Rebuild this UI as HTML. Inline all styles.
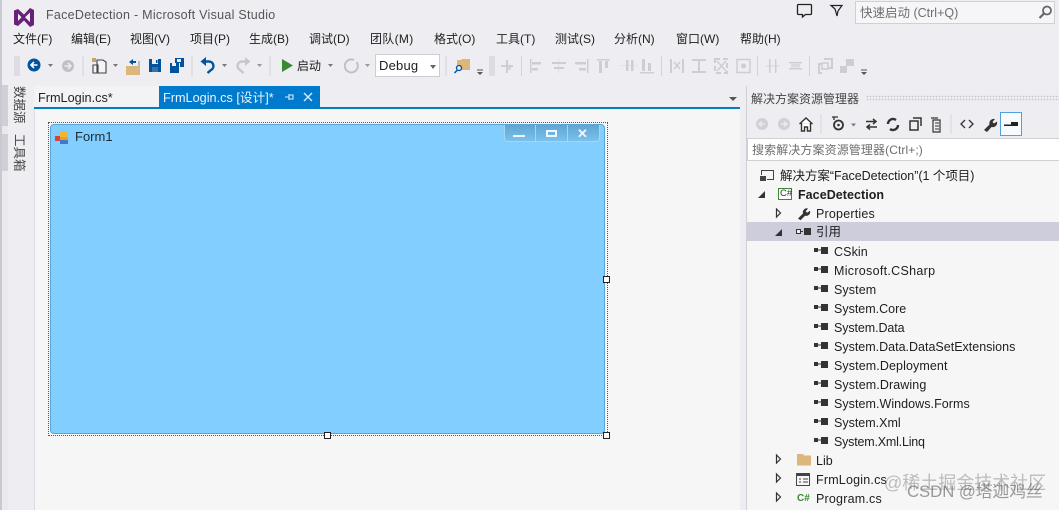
<!DOCTYPE html>
<html><head><meta charset="utf-8">
<style>
*{box-sizing:border-box}
html,body{margin:0;padding:0}
html{background:#eeeef2}
body{width:1059px;height:510px;overflow:hidden;position:relative;background:#eeeef2;font-family:"Liberation Sans","Noto Sans CJK SC",sans-serif;font-size:12px;color:#1e1e1e;filter:blur(.3px)}
.t{position:absolute;white-space:nowrap;line-height:16px}
.b{position:absolute}
svg{position:absolute;left:0;top:0}
.m{top:31px;font-size:12px;color:#1e1e1e}
.r{font-size:12.5px;left:834px}
.grip{position:absolute;width:6px;height:20px;background-image:radial-gradient(#a8a8b2 40%,transparent 45%);background-size:2px 2px}
</style></head>
<body>
<div class="b" style="left:0;top:0;width:2px;height:510px;background:#c9c9d2"></div>
<div class="b" style="left:2px;top:85px;width:6px;height:425px;background:#e9e9ee"></div>

<!-- document area -->
<div class="b" style="left:34px;top:109px;width:706px;height:401px;background:#f6f6f7;border-left:1px solid #dcdce2"></div>
<div class="b" style="left:34px;top:107px;width:706px;height:2px;background:#007fc0"></div>
<div class="b" style="left:159px;top:86px;width:161px;height:21px;background:#007acc"></div>
<div class="b" style="left:34px;top:86px;width:125px;height:21px;background:#f3f3f6"></div>

<!-- right panel -->
<div class="b" style="left:746px;top:86px;width:313px;height:424px;background:#f6f6f6;border-left:1px solid #cfcfd6"></div>
<div class="b" style="left:747px;top:86px;width:312px;height:53px;background:#eeeef2"></div>
<div class="b" style="left:747px;top:138px;width:312px;height:23px;background:#fff;border:1px solid #d0d0d6;border-right:0"></div>
<div class="b" style="left:747px;top:222px;width:312px;height:19px;background:#cdcddb"></div>
<div class="b" style="left:866px;top:95px;width:193px;height:6px;background-image:radial-gradient(#c4c4cc 35%,transparent 40%);background-size:3px 3px"></div>
<div class="b" style="left:1000px;top:112px;width:22px;height:24px;background:#f7fbff;border:1px solid #4fa0dc"></div>

<!-- search -->
<div class="b" style="left:855px;top:1px;width:200px;height:23px;background:#f6f6f8;border:1px solid #cfcfd6"></div>

<!-- form designer -->
<div class="b" style="left:48px;top:122px;width:560px;height:314px;border:1px dotted #555"></div>
<div class="b" style="left:50px;top:124px;width:555px;height:310px;background:#82cfff;border:1px solid #5ba5d6;border-radius:4px"></div>
<div class="b" style="left:504px;top:125px;width:96px;height:17px;background:linear-gradient(#5fa6d2,#7cc1ec);border:1px solid #a6d5f0;border-top:0;border-radius:0 0 4px 4px"></div>
<div class="b" style="left:535px;top:125px;width:1px;height:16px;background:#a6d5f0"></div>
<div class="b" style="left:567px;top:125px;width:1px;height:16px;background:#a6d5f0"></div>
<div class="b" style="left:513px;top:135px;width:12px;height:2px;background:#eef8ff"></div>
<div class="b" style="left:546px;top:130px;width:11px;height:7px;border:2px solid #eef8ff"></div>
<div class="t" style="left:577px;top:127px;color:#eef8ff;font-size:13px;font-weight:bold;line-height:14px">✕</div>
<div class="b" style="left:324px;top:432px;width:7px;height:7px;background:#fff;border:1px solid #222"></div>
<div class="b" style="left:603px;top:432px;width:7px;height:7px;background:#fff;border:1px solid #222"></div>
<div class="b" style="left:603px;top:276px;width:7px;height:7px;background:#fff;border:1px solid #222"></div>

<div class="grip" style="left:14px;top:56px"></div>
<div class="grip" style="left:489px;top:56px"></div>

<svg width="1059" height="510" viewBox="0 0 1059 510">
<!-- VS logo -->
<path d="M14 10.500l4-1.500 6 5.500 6-6.500 4 2v15l-4 2-6-6.500-6 5.500-4-1.500zM18 13.500v7.500l3.500-3.700zM30 12.500l-5 4.800 5 4.800z" fill="#68217a" fill-rule="evenodd"/>
<!-- nav -->
<circle cx="34" cy="65" r="6.500" fill="#00539c"/><path d="M37.500 65h-6M34 62l-3 3 3 3" stroke="#fff" stroke-width="1.600" fill="none"/>
<path d="M48 64h5l-2.500 3z" fill="#777"/>
<circle cx="68" cy="66" r="6" fill="#c0c0c6"/><path d="M64.500 66h6M68 63l3 3-3 3" stroke="#eee" stroke-width="1.500" fill="none"/>
<rect x="82.500" y="56" width="1" height="20" fill="#d0d0d8"/>
<!-- new project -->
<path d="M97 60h6l3 2v11h-9z M93 65h5v8h-5z" fill="#f4f4f6" stroke="#424242" stroke-width="1.100"/><rect x="92" y="58" width="4" height="4" fill="#c9a26a"/>
<path d="M113 64h5l-2.500 3z" fill="#777"/>
<!-- open -->
<path d="M126 66h14v9h-14z" fill="#dcb67a"/><path d="M129 62l4-3v2h3v2h-3v2z" fill="#00539c"/><rect x="138" y="61" width="2" height="6" fill="#bbb"/>
<!-- save -->
<path d="M149 59h12v13h-12z" fill="#00539c"/><rect x="152" y="59" width="6" height="5" fill="#eeeef2"/><rect x="156" y="60" width="1.500" height="3" fill="#00539c"/><rect x="152" y="67" width="6" height="5" fill="#3573ac"/>
<path d="M170 63h9v10h-9z M175 58h9v9h-4v-4h-5z" fill="#00539c"/><rect x="177" y="59" width="4" height="3" fill="#eeeef2"/><rect x="172" y="63" width="4" height="3" fill="#eeeef2"/>
<rect x="191.500" y="56" width="1" height="20" fill="#d0d0d8"/>
<!-- undo -->
<path d="M203 61.500h6a4.500 4.500 0 0 1 2 8.500l-3.500 3" fill="none" stroke="#00539c" stroke-width="2.400"/><path d="M206 57v9l-5.500-4.500z" fill="#00539c"/>
<path d="M222 64h5l-2.500 3z" fill="#777"/>
<path d="M248 61.500h-6a4.500 4.500 0 0 0-2 8.500l3.500 3" fill="none" stroke="#c6c6cc" stroke-width="2.400"/><path d="M245 57v9l5.500-4.500z" fill="#c6c6cc"/>
<path d="M257 64h5l-2.500 3z" fill="#999"/>
<rect x="269.500" y="56" width="1" height="20" fill="#d0d0d8"/>
<path d="M282 59l11 6.500-11 6.500z" fill="#388a34"/>
<path d="M328 64h5l-2.500 3z" fill="#777"/>
<path d="M354 60a6.500 6.500 0 1 0 2.500 2" fill="none" stroke="#c0c0c6" stroke-width="2"/>
<path d="M365 64h5l-2.500 3z" fill="#999"/>
<rect x="445.500" y="56" width="1" height="20" fill="#d0d0d8"/>
<!-- find in files -->
<path d="M457 60h4l1-1h8v11h-13z" fill="#dcb67a"/><circle cx="459" cy="68" r="2.500" fill="#eeeef2" stroke="#00539c" stroke-width="1.300"/><path d="M457 70.500l-2.500 2.500" stroke="#00539c" stroke-width="1.500"/>
<path d="M477 70h6" stroke="#555"/><path d="M477 72h6l-3 3z" fill="#555"/>
<!-- disabled align icons -->
<g fill="#cdcdd4">
<rect x="501" y="65" width="12" height="2"/><rect x="506" y="60" width="2" height="13"/><rect x="508" y="66" width="3" height="4" opacity=".7"/>
<rect x="521" y="56" width="1" height="20" fill="#d3d3da"/>
<rect x="530" y="59" width="1.500" height="14"/><rect x="532" y="62" width="9" height="2.500"/><rect x="532" y="68" width="6" height="2.500"/>
<rect x="552" y="62" width="14" height="2"/><rect x="554" y="67" width="10" height="2"/><rect x="558" y="59" width="1" height="14" opacity=".5"/>
<rect x="587" y="59" width="1.500" height="14"/><rect x="575" y="62" width="11" height="2.500"/><rect x="579" y="68" width="7" height="2.500"/>
<rect x="597" y="59" width="13" height="1.500"/><rect x="599" y="61" width="3" height="12"/><rect x="605" y="61" width="3" height="7"/>
<rect x="626" y="60" width="2.500" height="11"/><rect x="631" y="60" width="2.500" height="11"/><rect x="620" y="65" width="18" height="1" opacity=".4"/>
<rect x="640" y="72" width="14" height="1.500"/><rect x="642" y="59" width="3" height="12"/><rect x="648" y="63" width="3" height="8"/>
<rect x="661" y="56" width="1" height="20" fill="#d3d3da"/>
<rect x="670" y="59" width="2" height="14"/><rect x="682" y="59" width="2" height="14"/><path d="M674 62l6 7M680 62l-6 7" stroke="#cdcdd4" stroke-width="1.600"/>
<path d="M692 59h14v2h-6v10h6v2h-14v-2h6v-10h-6z"/>
<path d="M715 59h12v14h-12z" fill="none" stroke="#cdcdd4" stroke-width="2" stroke-dasharray="5 3"/><path d="M717 61l9 10M726 61l-9 10" stroke="#cdcdd4" stroke-width="1.500"/>
<rect x="737" y="59.500" width="13" height="13" fill="none" stroke="#cdcdd4" stroke-width="1.500"/><circle cx="743.500" cy="66" r="2.500"/>
<rect x="757" y="56" width="1" height="20" fill="#d3d3da"/>
<rect x="769" y="59" width="1.500" height="14"/><rect x="775" y="59" width="1.500" height="14"/><rect x="766" y="65" width="14" height="1.500" opacity=".5"/>
<rect x="789" y="62" width="13" height="1.500"/><rect x="789" y="68" width="13" height="1.500"/><rect x="791" y="64" width="9" height="3.500" opacity=".6"/>
<rect x="809" y="56" width="1" height="20" fill="#d3d3da"/>
<path d="M824 59h8v9h-3M819 73v-9h3M818 73h4" fill="none" stroke="#cdcdd4" stroke-width="2"/><rect x="822" y="63" width="6" height="6" fill="none" stroke="#cdcdd4" stroke-width="1.600"/>
<rect x="840" y="66" width="7" height="7"/><rect x="846" y="59" width="8" height="7"/>
</g>
<path d="M861 70h6" stroke="#555"/><path d="M861 72h6l-3 3z" fill="#555"/>

<!-- title icons -->
<path d="M798.500 4.500h12a1 1 0 0 1 1 1v8a1 1 0 0 1-1 1h-5l-3 2.500v-2.500h-4a1 1 0 0 1-1-1v-8a1 1 0 0 1 1-1z" fill="none" stroke="#222" stroke-width="1.300"/>
<path d="M831 5.500h11l-4 5.500-1 5-2-7z" fill="none" stroke="#222" stroke-width="1.200"/>
<circle cx="1047" cy="10.500" r="4" fill="none" stroke="#666" stroke-width="1.800"/><path d="M1044 13.500l-4.500 4.500" stroke="#666" stroke-width="2.200"/>

<!-- tab pin/close -->
<path d="M285 97h4M289 94v6M289 95h4v4h-4" stroke="#d8ecf8" fill="none" stroke-width="1.100"/>
<path d="M304 93l8 8M312 93l-8 8" stroke="#d8ecf8" stroke-width="1.400"/>
<path d="M729 97h8l-4 4z" fill="#555"/>

<!-- form icon -->
<rect x="55" y="136" width="5" height="5" fill="#d9413a"/><rect x="60" y="131" width="8" height="6" fill="#efb72f"/><rect x="60" y="137" width="8" height="3" fill="#ef9a2f"/><rect x="60" y="140" width="8" height="4" fill="#3f79c8"/>

<!-- SE toolbar -->
<circle cx="762" cy="124" r="6" fill="#d0d0d6"/><path d="M765 124h-6M762 121.500l-3 2.500 3 2.500" stroke="#eee" stroke-width="1.300" fill="none"/>
<circle cx="784" cy="124" r="6" fill="#d0d0d6"/><path d="M781 124h6M784 121.500l3 2.500-3 2.500" stroke="#eee" stroke-width="1.300" fill="none"/>
<path d="M799.500 124l6.500-6 6.500 6M801.500 123v8h3v-4h3v4h3v-8" fill="#fff" stroke="#333" stroke-width="1.400"/>
<rect x="820.500" y="114" width="1" height="20" fill="#d4d4da"/>
<circle cx="838.500" cy="125" r="4.500" fill="none" stroke="#333" stroke-width="1.800"/><path d="M832 117h6M834 117v3" stroke="#333" stroke-width="1.300"/><circle cx="838.500" cy="125" r="1.300" fill="#333"/>
<path d="M851 123.500h5l-2.500 3z" fill="#777"/>
<path d="M866 121.500h10M873 119l3 2.500-3 2.500M877 127h-10M870 124.500l-3 2.500 3 2.500" stroke="#333" stroke-width="1.500" fill="none"/>
<path d="M888 124a5 5 0 0 1 8-4M898 125a5 5 0 0 1-8 4" stroke="#333" stroke-width="2.400" fill="none"/>
<path d="M910 121h8v9h-8zM913 118h8v8" fill="none" stroke="#333" stroke-width="1.500"/>
<path d="M933 120h7v12h-7zM931 118h7" fill="none" stroke="#333" stroke-width="1.200"/><path d="M935 123h4M935 126h4M935 129h4" stroke="#333"/>
<rect x="950.500" y="114" width="1" height="20" fill="#d4d4da"/>
<path d="M965 120l-4 4 4 4M969 120l4 4-4 4" fill="none" stroke="#333" stroke-width="1.300"/>
<path d="M984 130l5.500-5.500a4.500 4.500 0 0 1 5.500-5.500l-2.500 3 1.500 1.500 3-2a4.500 4.500 0 0 1-5.500 5.500l-4.500 5z" fill="#333"/>
<rect x="1004" y="124.500" width="8" height="1.500" fill="#222"/><rect x="1011" y="122" width="7" height="4" fill="#222"/>

<!-- tree -->
<rect x="761.500" y="170.500" width="12" height="9" fill="none" stroke="#444"/><rect x="759" y="175" width="8" height="7" fill="#f6f6f6"/><path d="M760 176h6v5h-6z" fill="#444"/>
<path d="M765 191v7h-7z" fill="#333"/>
<rect x="778.500" y="188.500" width="13" height="11" fill="#fff" stroke="#388a34"/>
<path d="M776.500 209l4 4-4 4z" fill="none" stroke="#333" stroke-width="1.200"/>
<path d="M798 218.500l5-5a4 4 0 0 1 5-5l-2.300 2.700 1.500 1.500 2.800-2a4 4 0 0 1-5 5l-4.500 4.500z" fill="#333"/>
<path d="M782 229v7h-7z" fill="#333"/>
<g fill="#333"><rect x="796" y="229" width="5" height="5"/><rect x="801" y="231" width="2" height="1"/><rect x="804" y="228" width="7" height="7"/></g>
<rect x="797" y="230" width="3" height="3" fill="#eee"/>
<path d="M776.500 455l4 4-4 4z M776.500 474l4 4-4 4z M776.500 493l4 4-4 4z" fill="none" stroke="#333" stroke-width="1.200"/>
<path d="M797 454h6l1 1.500h7v10h-14z" fill="#dcb67a"/>
<rect x="796.500" y="473.500" width="13" height="12" fill="none" stroke="#444"/><rect x="796.500" y="473.500" width="13" height="2.500" fill="#444"/><path d="M799 479h2M799 482h2M803 479h5M803 482h5" stroke="#444"/>
<g fill="#333" id="refs">
<rect x="814" y="248" width="4" height="4"/><rect x="818" y="249.500" width="3" height="1"/><rect x="821" y="247" width="7" height="7"/>
<rect x="814" y="267" width="4" height="4"/><rect x="818" y="268.500" width="3" height="1"/><rect x="821" y="266" width="7" height="7"/>
<rect x="814" y="286" width="4" height="4"/><rect x="818" y="287.500" width="3" height="1"/><rect x="821" y="285" width="7" height="7"/>
<rect x="814" y="305" width="4" height="4"/><rect x="818" y="306.500" width="3" height="1"/><rect x="821" y="304" width="7" height="7"/>
<rect x="814" y="324" width="4" height="4"/><rect x="818" y="325.500" width="3" height="1"/><rect x="821" y="323" width="7" height="7"/>
<rect x="814" y="343" width="4" height="4"/><rect x="818" y="344.500" width="3" height="1"/><rect x="821" y="342" width="7" height="7"/>
<rect x="814" y="362" width="4" height="4"/><rect x="818" y="363.500" width="3" height="1"/><rect x="821" y="361" width="7" height="7"/>
<rect x="814" y="381" width="4" height="4"/><rect x="818" y="382.500" width="3" height="1"/><rect x="821" y="380" width="7" height="7"/>
<rect x="814" y="400" width="4" height="4"/><rect x="818" y="401.500" width="3" height="1"/><rect x="821" y="399" width="7" height="7"/>
<rect x="814" y="419" width="4" height="4"/><rect x="818" y="420.500" width="3" height="1"/><rect x="821" y="418" width="7" height="7"/>
<rect x="814" y="438" width="4" height="4"/><rect x="818" y="439.500" width="3" height="1"/><rect x="821" y="437" width="7" height="7"/>
</g>
</svg>

<!-- sidebar tabs -->
<div class="b" style="left:2px;top:85px;width:6px;height:41px;background:#cfcfd6"></div>
<div class="b" style="left:2px;top:134px;width:6px;height:37px;background:#cfcfd6"></div>
<div class="t" style="left:11px;top:86px;writing-mode:vertical-rl;text-orientation:sideways;font-size:12.500px;line-height:16px;color:#444">数据源</div>
<div class="t" style="left:11px;top:134px;writing-mode:vertical-rl;text-orientation:sideways;font-size:12.500px;line-height:16px;color:#444">工具箱</div>

<div class="t" style="left:46px;top:7px;font-size:12.500px;color:#555;letter-spacing:.28px">FaceDetection - Microsoft Visual Studio</div>
<div class="t m" style="left:13px">文件(F)</div>
<div class="t m" style="left:71px">编辑(E)</div>
<div class="t m" style="left:130px">视图(V)</div>
<div class="t m" style="left:190px">项目(P)</div>
<div class="t m" style="left:249px">生成(B)</div>
<div class="t m" style="left:309px">调试(D)</div>
<div class="t m" style="left:370px;letter-spacing:.3px">团队(M)</div>
<div class="t m" style="left:434px">格式(O)</div>
<div class="t m" style="left:496px">工具(T)</div>
<div class="t m" style="left:555px">测试(S)</div>
<div class="t m" style="left:614px">分析(N)</div>
<div class="t m" style="left:676px">窗口(W)</div>
<div class="t m" style="left:740px">帮助(H)</div>
<div class="t" style="left:860px;top:5px;font-size:12.500px;color:#6e6e6e">快速启动 (Ctrl+Q)</div>

<div class="t" style="left:297px;top:58px;font-size:12px">启动</div>
<div class="b" style="left:375px;top:54px;width:65px;height:23px;background:#fff;border:1px solid #ccced6"></div>
<div class="t" style="left:379px;top:58px;font-size:13px;letter-spacing:.2px">Debug</div>
<div class="b" style="left:430px;top:65px;border:3.500px solid transparent;border-top:4px solid #666"></div>

<div class="t" style="left:38px;top:90px;font-size:12.700px;color:#222">FrmLogin.cs*</div>
<div class="t" style="left:163px;top:90px;font-size:12.700px;color:#eaf5fc">FrmLogin.cs [设计]*</div>
<div class="t" style="left:75px;top:129px;font-size:13px;color:#1e2a33">Form1</div>

<div class="t" style="left:751px;top:91px;font-size:12px;color:#444">解决方案资源管理器</div>
<div class="t" style="left:752px;top:142px;font-size:12px;color:#6e6e6e;letter-spacing:.1px">搜索解决方案资源管理器(Ctrl+;)</div>
<div class="t" style="left:780px;top:168px;font-size:12.500px;letter-spacing:-.03px">解决方案“FaceDetection”(1 个项目)</div>
<div class="t" style="left:780px;top:186px;font-size:9.500px;color:#333">C#</div>
<div class="t" style="left:798px;top:187px;font-size:12.500px;font-weight:bold;letter-spacing:.05px">FaceDetection</div>
<div class="t" style="left:816px;top:206px;font-size:12.500px;letter-spacing:.2px">Properties</div>
<div class="t" style="left:816px;top:224px;font-size:12.500px">引用</div>
<div class="t r" style="top:244px;letter-spacing:.1px">CSkin</div>
<div class="t r" style="top:263px;letter-spacing:.3px">Microsoft.CSharp</div>
<div class="t r" style="top:282px;letter-spacing:.1px">System</div>
<div class="t r" style="top:301px">System.Core</div>
<div class="t r" style="top:320px;letter-spacing:-.1px">System.Data</div>
<div class="t r" style="top:339px">System.Data.DataSetExtensions</div>
<div class="t r" style="top:358px;letter-spacing:.1px">System.Deployment</div>
<div class="t r" style="top:377px;letter-spacing:.1px">System.Drawing</div>
<div class="t r" style="top:396px;letter-spacing:.05px">System.Windows.Forms</div>
<div class="t r" style="top:415px">System.Xml</div>
<div class="t r" style="top:434px;letter-spacing:-.2px">System.Xml.Linq</div>
<div class="t" style="left:816px;top:453px;font-size:12.500px">Lib</div>
<div class="t" style="left:816px;top:472px;font-size:12.500px;letter-spacing:.2px">FrmLogin.cs</div>
<div class="t" style="left:797px;top:491px;font-size:10px;font-weight:bold;color:#388a34">C#</div>
<div class="t" style="left:816px;top:491px;font-size:12.500px;letter-spacing:.2px">Program.cs</div>

<!-- watermarks -->
<div class="t" style="left:884px;top:475px;font-size:18px;color:rgba(130,130,130,.5)">@稀土掘金技术社区</div>
<div class="t" style="left:907px;top:484px;font-size:16.700px;color:rgba(90,90,90,.6)">CSDN @塔迦鸡丝</div>
</body></html>
